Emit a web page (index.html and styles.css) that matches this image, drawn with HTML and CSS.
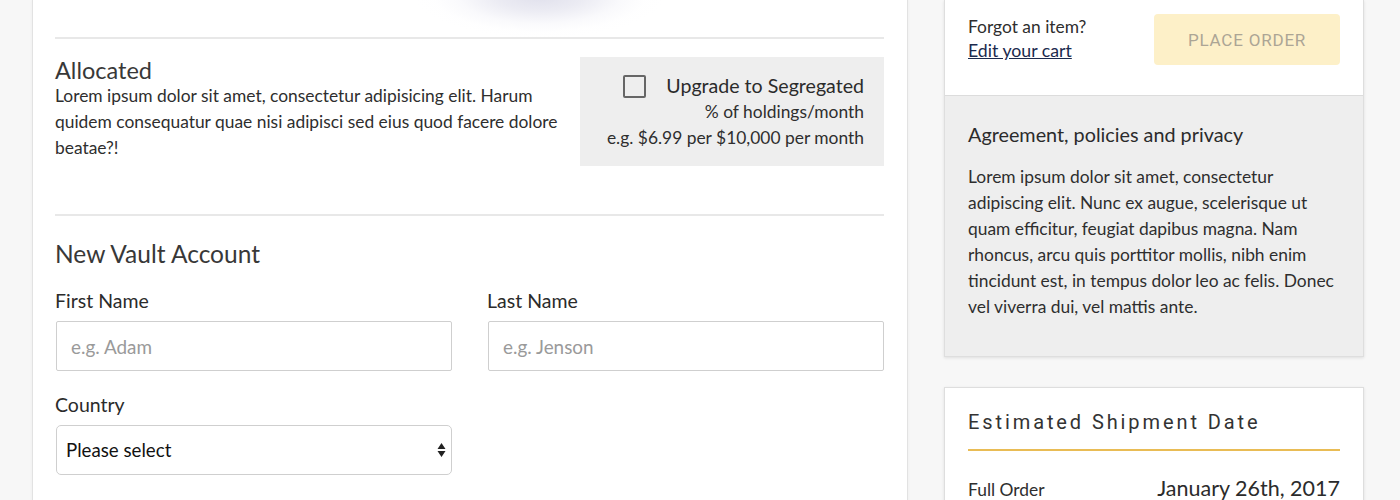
FILE: index.html
```html
<!DOCTYPE html>
<html lang="en">
<head>
<meta charset="utf-8">
<title>Checkout</title>
<link rel="stylesheet" href="styles.css">
</head>
<body>
<div class="page">
  <main class="main-card">
    <div class="blob"></div>
    <hr class="rule">
    <section class="allocated">
      <div class="allocated-text">
        <h2 class="section-title alloc-title">Allocated</h2>
        <p class="body-text">Lorem ipsum dolor sit amet, consectetur adipisicing elit. Harum quidem consequatur quae nisi adipisci sed eius quod facere dolore beatae?!</p>
      </div>
      <div class="upgrade-box">
        <label class="upgrade-line"><span class="checkbox"></span><span class="upgrade-title">Upgrade to Segregated</span></label>
        <div class="upgrade-note">% of holdings/month</div>
        <div class="upgrade-note">e.g. $6.99 per $10,000 per month</div>
      </div>
    </section>
    <hr class="rule rule-second">
    <h2 class="section-title vault-title">New Vault Account</h2>
    <div class="form-grid">
      <div class="field">
        <label class="field-label">First Name</label>
        <input class="text-input" type="text" placeholder="e.g. Adam">
      </div>
      <div class="field">
        <label class="field-label">Last Name</label>
        <input class="text-input" type="text" placeholder="e.g. Jenson">
      </div>
      <div class="field">
        <label class="field-label">Country</label>
        <div class="select-wrap">
          <select class="select-input"><option>Please select</option></select>
          <svg class="select-arrows" width="9" height="16" viewBox="0 0 9 16"><path d="M4.5 1 L8.5 7 L0.5 7 Z M0.5 9 L8.5 9 L4.5 15 Z" fill="#222"/></svg>
        </div>
      </div>
      <div class="field"></div>
      <div class="field field-row">
        <label class="field-label">Address Line 1</label>
        <span class="field-hint">(required)</span>
      </div>
      <div class="field field-row">
        <label class="field-label">Address Line 2</label>
        <span class="field-hint">(optional)</span>
      </div>
    </div>
  </main>
  <aside class="side">
    <div class="card order-card">
      <div class="order-top">
        <div class="forgot">
          <div>Forgot an item?</div>
          <a class="edit-link" href="#">Edit your cart</a>
        </div>
        <button class="place-btn" type="button">PLACE ORDER</button>
      </div>
      <div class="agreement">
        <h3 class="agreement-title">Agreement, policies and privacy</h3>
        <p class="body-text">Lorem ipsum dolor sit amet, consectetur adipiscing elit. Nunc ex augue, scelerisque ut quam efficitur, feugiat dapibus magna. Nam rhoncus, arcu quis porttitor mollis, nibh enim tincidunt est, in tempus dolor leo ac felis. Donec vel viverra dui, vel mattis ante.</p>
      </div>
    </div>
    <div class="card ship-card">
      <h3 class="ship-title">Estimated Shipment Date</h3>
      <div class="ship-row">
        <span class="ship-label">Full Order</span>
        <span class="ship-date">January 26th, 2017</span>
      </div>
    </div>
  </aside>
</div>
</body>
</html>
```

FILE: styles.css
```css
* { box-sizing: border-box; }
html, body { margin: 0; padding: 0; }
body {
  background: #f7f7f7;
  font-family: "Lato", "Open Sans", sans-serif;
  color: #2e2e2e;
}
.page {
  display: flex;
  align-items: flex-start;
  gap: 36px;
  padding: 0 36px 0 32px;
  height: 500px;
  overflow: hidden;
}
.main-card {
  width: 876px;
  flex: none;
  background: #fff;
  border-left: 1px solid #e2e2e2;
  border-right: 1px solid #e2e2e2;
  box-shadow: 0 0 3px rgba(0,0,0,0.05);
  padding: 0 23px 60px 22px;
}
.blob {
  height: 37px;
  background: radial-gradient(ellipse 125px 42px at 485px -4px, rgba(224,224,236,1) 0%, rgba(232,232,241,0.85) 35%, rgba(244,244,249,0.5) 65%, rgba(252,252,254,0.2) 85%, rgba(255,255,255,0) 100%);
}
.rule {
  border: 0;
  height: 2px;
  background: #e8e8e8;
  margin: 0;
}
.allocated {
  display: flex;
  gap: 20px;
  align-items: flex-start;
  margin-top: 18px;
}
.allocated-text { flex: 1; }
.section-title {
  font-size: 24.5px;
  line-height: 26.4px;
  font-weight: 400;
  color: #383838;
  margin: 0;
}
.alloc-title { font-size: 23.5px; padding-top: 1px; line-height: 25.4px; }
.body-text {
  font-size: 17.4px;
  line-height: 26px;
  margin: 0;
  color: #2e2e2e;
}
.upgrade-box {
  width: 304px;
  flex: none;
  background: #eeeeee;
  padding: 16px 20px 15px;
  text-align: right;
}
.upgrade-line {
  display: flex;
  justify-content: flex-end;
  align-items: center;
  gap: 20px;
  font-size: 19.6px;
  line-height: 26px;
  color: #2b2b2b;
}
.checkbox {
  width: 23px;
  height: 23px;
  border: 2px solid #666;
  border-radius: 2px;
}
.upgrade-note {
  font-size: 17.4px;
  line-height: 26px;
}
.rule-second { margin-top: 48px; }
.vault-title { margin-top: 25px; }
.form-grid {
  display: grid;
  grid-template-columns: 397px 397px;
  column-gap: 35px;
  row-gap: 23px;
  margin-top: 23px;
}
.field { display: flex; flex-direction: column; }
.field-label {
  font-size: 19.5px;
  line-height: 22px;
  color: #2b2b2b;
  margin-bottom: 9px;
}
.text-input {
  width: 396px;
  height: 50px;
  margin-left: 1px;
  border: 1px solid #cfcfcf;
  border-radius: 2px;
  padding: 0 14px;
  font-family: "Lato", sans-serif;
  font-size: 18.9px;
  color: #333;
  background: #fff;
}
.text-input::placeholder { color: #9a9a9a; }
.select-wrap { position: relative; margin-left: 1px; }
.select-input {
  -webkit-appearance: none;
  appearance: none;
  width: 396px;
  height: 50px;
  border: 1px solid #cfcfcf;
  border-radius: 5px;
  padding: 0 9px;
  font-family: "Lato", sans-serif;
  font-size: 18.7px;
  color: #111;
  background: #fff;
}
.select-arrows {
  position: absolute;
  right: 6px;
  top: 17px;
}
.field-row {
  flex-direction: row;
  justify-content: space-between;
  padding-left: 12px;
}
.field-hint {
  font-size: 17px;
  line-height: 22px;
  color: #555;
}
.side {
  width: 420px;
  flex: none;
}
.card {
  background: #fff;
  border: 1px solid #dedede;
  box-shadow: 0 1px 3px rgba(0,0,0,0.1);
}
.order-card { border-top: 0; }
.order-top {
  display: flex;
  justify-content: space-between;
  align-items: flex-start;
  padding: 14px 23px 30px;
}
.forgot {
  font-size: 17.4px;
  line-height: 24px;
  padding-top: 1px;
}
.edit-link {
  color: #1b2a4e;
  text-decoration: underline;
  font-size: 17.7px;
}
.place-btn {
  width: 186px;
  height: 51px;
  border: 0;
  border-radius: 4px;
  background: #fdf0c8;
  color: #aca595;
  font-family: "Roboto", sans-serif;
  font-size: 17px;
  letter-spacing: 0.8px;
}
.agreement {
  background: #eeeeee;
  border-top: 1px solid #dcdcdc;
  padding: 26px 23px 36px;
}
.agreement-title {
  font-size: 19.8px;
  line-height: 24px;
  font-weight: 400;
  color: #2b2b2b;
  margin: 0 0 18px;
}
.ship-card {
  margin-top: 30px;
  padding: 22px 23px;
}
.ship-title {
  font-family: "Roboto", sans-serif;
  font-weight: 400;
  font-size: 20px;
  line-height: 24px;
  letter-spacing: 2.9px;
  color: #333;
  margin: 0;
  padding-bottom: 15px;
  border-bottom: 2px solid #e9bc55;
}
.ship-row {
  display: flex;
  justify-content: space-between;
  align-items: baseline;
  margin-top: 24px;
  line-height: 26px;
}
.ship-label { font-size: 17.4px; }
.ship-date { font-size: 21.5px; color: #2b2b2b; }
```
